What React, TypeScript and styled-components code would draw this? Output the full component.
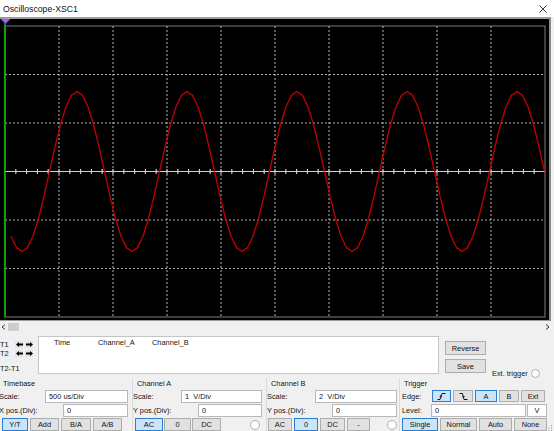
import React, { useMemo } from "react"
import styled, { createGlobalStyle } from "styled-components"

const GlobalStyle = createGlobalStyle`
  html, body {
    margin: 0;
    padding: 0;
    background: #f0f0f0;
  }
  body {
    font-family: "Liberation Sans", Arial, sans-serif;
  }
`

const Window = styled.div`
  position: relative;
  width: 554px;
  height: 431px;
  overflow: hidden;
  background: #f0f0f0;
  display: flex;
  flex-direction: column;
  color: #141414;
  font-size: 7.4px;
`

const TitleBar = styled.div`
  height: 17px;
  flex: none;
  background: #fff;
  display: flex;
  align-items: center;
  justify-content: space-between;
  padding: 0 7px 0 3px;
`

const Title = styled.span`
  font-size: 8.7px;
  color: #111;
`

const Screen = styled.div`
  width: 551px;
  height: 304px;
  flex: none;
  box-sizing: border-box;
  background: #000;
  border-top: 2px solid #9c9c9c;
  border-right: 2px solid #8c8c8c;
  border-bottom: 1px solid #9c9c9c;
  svg {
    display: block;
  }
`

const ScrollRow = styled.div`
  height: 12px;
  flex: none;
  display: flex;
  align-items: center;
  padding: 0 4px 0 1px;
`

const Thumb = styled.div`
  width: 11px;
  height: 8px;
  margin-left: 2px;
  background: #cdcdcd;
`

const CursorPanel = styled.div`
  height: 45px;
  flex: none;
  display: flex;
`

const CursorLabels = styled.div`
  width: 38px;
  flex: none;
  padding-top: 7px;
  box-sizing: border-box;
  display: flex;
  flex-direction: column;
`

const CursorRow = styled.div<{ $mt?: number }>`
  height: 9px;
  display: flex;
  align-items: center;
  margin-top: ${(p) => p.$mt || 0}px;
  white-space: nowrap;
`

const CursorName = styled.span<{ $w?: number }>`
  width: ${(p) => (p.$w ? `${p.$w}px` : "auto")};
  flex: none;
`

const ArrowBtn = styled.div`
  width: 8px;
  height: 7px;
  margin-right: 2px;
  background: #e4e4e4;
  display: flex;
  align-items: center;
  justify-content: center;
`

const Readout = styled.div`
  width: 401px;
  height: 38px;
  margin-top: 3px;
  flex: none;
  box-sizing: border-box;
  background: #fff;
  border: 1px solid #c4c4c4;
  padding: 1px 0 0 15px;
  display: flex;
  line-height: 9px;
`

const ReadCol = styled.span<{ $w?: number }>`
  width: ${(p) => (p.$w ? `${p.$w}px` : "auto")};
  flex: none;
`

const SideButtons = styled.div`
  margin-left: 6px;
  padding-top: 8px;
  display: flex;
  flex-direction: column;
  gap: 4px;
`

const ExtTrigger = styled.div`
  margin-left: 6px;
  align-self: flex-end;
  height: 10px;
  display: flex;
  align-items: center;
`

const Controls = styled.div`
  flex: 1;
  display: flex;
`

const Group = styled.div<{ $w: number; $pl: number; $pr: number; $line?: boolean }>`
  width: ${(p) => p.$w}px;
  flex: none;
  box-sizing: border-box;
  padding: 0 ${(p) => p.$pr}px 0 ${(p) => p.$pl}px;
  border-left: ${(p) => (p.$line ? "1px solid #dadada" : "none")};
  display: flex;
  flex-direction: column;
`

const GroupTitle = styled.div<{ $ml: number }>`
  height: 11px;
  line-height: 11px;
  margin-left: ${(p) => p.$ml}px;
`

const Row = styled.div`
  height: 14px;
  display: flex;
  align-items: center;
  justify-content: space-between;
`

const Label = styled.span<{ $ml?: number; $w?: number }>`
  margin-left: ${(p) => p.$ml || 0}px;
  width: ${(p) => (p.$w ? `${p.$w}px` : "auto")};
  flex: none;
  white-space: nowrap;
`

const Field = styled.div<{ $w: number; $center?: boolean }>`
  width: ${(p) => p.$w}px;
  height: 13px;
  flex: none;
  box-sizing: border-box;
  background: #fff;
  border: 1px solid #b8b8b8;
  padding-left: ${(p) => (p.$center ? 0 : 3)}px;
  line-height: 11px;
  text-align: ${(p) => (p.$center ? "center" : "left")};
`

const Btn = styled.div<{ $w: number; $on?: boolean; $h?: number }>`
  width: ${(p) => p.$w}px;
  height: ${(p) => p.$h || 13}px;
  flex: none;
  box-sizing: border-box;
  border: 1px solid ${(p) => (p.$on ? "#2a7fd0" : "#adadad")};
  background: ${(p) => (p.$on ? "#cce4f7" : "#e1e1e1")};
  display: flex;
  align-items: center;
  justify-content: center;
  color: #111;
`

const ButtonRow = styled.div<{ $ml: number; $gap: number }>`
  margin-top: 1px;
  height: 13px;
  display: flex;
  align-items: center;
  gap: ${(p) => p.$gap}px;
  padding-left: ${(p) => p.$ml}px;
`

const EdgeRow = styled.div`
  height: 14px;
  display: flex;
  align-items: center;
  gap: 2px;
`

const Radio = styled.div<{ $mr?: number }>`
  width: 10px;
  height: 10px;
  margin-left: auto;
  margin-right: ${(p) => p.$mr || 0}px;
  box-sizing: border-box;
  border-radius: 50%;
  border: 1px solid #b0b0b0;
  background: #fdfdfd;
  flex: none;
`

const ExtRadio = styled(Radio)`
  margin-left: 3px;
  width: 9px;
  height: 9px;
`

const Grip = styled.div`
  position: absolute;
  right: 1px;
  bottom: 1px;
  width: 5px;
  height: 6px;
`

// screen geometry (svg-local pixels)
const W = 549
const H = 301
const GX0 = 5
const GX1 = 545
const GY0 = 7
const GY1 = 298
const DX = 54
const DY = 48.5
const CY = GY0 + DY * 3

const Arrow = ({ dir }: { dir: "l" | "r" }) => (
  <svg width="7" height="5" viewBox="0 0 7 5">
    {dir === "l" ? (
      <path d="M0 2.5 L3 0 V1.6 H7 V3.4 H3 V5 Z" fill="#000" />
    ) : (
      <path d="M7 2.5 L4 0 V1.6 H0 V3.4 H4 V5 Z" fill="#000" />
    )}
  </svg>
)

const Scope = () => {
  const trace = useMemo(() => {
    const pts: string[] = []
    for (let x = 11; x <= GX1; x += 5.5) {
      const y = CY - 80 * Math.cos((2 * Math.PI * (x - 77)) / 110)
      pts.push(`${x.toFixed(1)},${y.toFixed(1)}`)
    }
    return pts.join(" ")
  }, [])

  const verticals = Array.from({ length: 9 }, (_, i) => GX0 + DX * (i + 1))
  const horizontals = [1, 2, 4, 5].map((k) => GY0 + DY * k)
  const ticks = Array.from({ length: 49 }, (_, i) => GX0 + 10.8 * (i + 1))

  return (
    <svg width={W} height={H} viewBox={`0 0 ${W} ${H}`}>
      <rect x={GX0} y={GY0} width={GX1 - GX0} height={GY1 - GY0} fill="none" stroke="#7c7c7c" strokeWidth="1" />
      {verticals.map((x) => (
        <line key={x} x1={x} y1={GY0} x2={x} y2={GY1} stroke="#b4b4b4" strokeWidth="1" strokeDasharray="2 2" />
      ))}
      {horizontals.map((y) => (
        <line key={y} x1={GX0} y1={y} x2={GX1} y2={y} stroke="#b4b4b4" strokeWidth="1" strokeDasharray="2 2" />
      ))}
      <line x1={GX0} y1={CY} x2={GX1} y2={CY} stroke="#d2d2d2" strokeWidth="1" />
      {ticks.map((x) => (
        <line key={x} x1={x} y1={CY - 2.5} x2={x} y2={CY + 2.5} stroke="#cfcfcf" strokeWidth="1.2" />
      ))}
      <polyline points={trace} fill="none" stroke="#c00000" strokeWidth="1.3" strokeLinejoin="round" />
      <line x1={GX0} y1={2} x2={GX0} y2={GY1} stroke="#00c000" strokeWidth="1.5" />
      <polygon points="0.5,0 10.5,0 5.5,5" fill="#4a6cff" />
      <polygon points="2,0 9,0 5.5,3.6" fill="#ff3ce0" />
    </svg>
  )
}

const RisingEdge = () => (
  <svg width="9" height="7" viewBox="0 0 9 7">
    <path d="M0.5 6.5 H3 L5 0.5 H8.5" fill="none" stroke="#000" strokeWidth="0.9" />
    <path d="M2.6 3.8 L4 2.6 L4.4 4.4" fill="none" stroke="#000" strokeWidth="0.8" />
  </svg>
)

const FallingEdge = () => (
  <svg width="9" height="7" viewBox="0 0 9 7">
    <path d="M0.5 0.5 H3.5 L5 6.5 H8.5" fill="none" stroke="#000" strokeWidth="0.9" />
    <path d="M3.2 3.2 L4.4 4.4 L5.6 3.2" fill="none" stroke="#000" strokeWidth="0.8" />
  </svg>
)

export default function App() {
  return (
    <>
      <GlobalStyle />
      <Window>
        <TitleBar>
          <Title>Oscilloscope-XSC1</Title>
          <svg width="8" height="8" viewBox="0 0 8 8">
            <path d="M0.5 0.5 L7.5 7.5 M7.5 0.5 L0.5 7.5" stroke="#222" strokeWidth="0.9" />
          </svg>
        </TitleBar>

        <Screen>
          <Scope />
        </Screen>

        <ScrollRow>
          <svg width="5" height="6" viewBox="0 0 5 6">
            <path d="M4 0.5 L1 3 L4 5.5" fill="none" stroke="#333" strokeWidth="1" />
          </svg>
          <Thumb />
          <svg width="5" height="6" viewBox="0 0 5 6" style={{ marginLeft: "auto" }}>
            <path d="M1 0.5 L4 3 L1 5.5" fill="none" stroke="#333" strokeWidth="1" />
          </svg>
        </ScrollRow>

        <CursorPanel>
          <CursorLabels>
            <CursorRow>
              <CursorName $w={15}>T1</CursorName>
              <ArrowBtn><Arrow dir="l" /></ArrowBtn>
              <ArrowBtn><Arrow dir="r" /></ArrowBtn>
            </CursorRow>
            <CursorRow>
              <CursorName $w={15}>T2</CursorName>
              <ArrowBtn><Arrow dir="l" /></ArrowBtn>
              <ArrowBtn><Arrow dir="r" /></ArrowBtn>
            </CursorRow>
            <CursorRow $mt={6}>
              <CursorName>T2-T1</CursorName>
            </CursorRow>
          </CursorLabels>
          <Readout>
            <ReadCol $w={44}>Time</ReadCol>
            <ReadCol $w={54}>Channel_A</ReadCol>
            <ReadCol>Channel_B</ReadCol>
          </Readout>
          <SideButtons>
            <Btn $w={41} $h={14}>Reverse</Btn>
            <Btn $w={41} $h={14}>Save</Btn>
          </SideButtons>
          <ExtTrigger>
            <span>Ext. trigger</span>
            <ExtRadio />
          </ExtTrigger>
        </CursorPanel>

        <Controls>
          <Group $w={132} $pl={0} $pr={4}>
            <GroupTitle $ml={3}>Timebase</GroupTitle>
            <Row>
              <Label $ml={-1}>Scale:</Label>
              <Field $w={83}>500 us/Div</Field>
            </Row>
            <Row>
              <Label $ml={-1}>X pos.(Div):</Label>
              <Field $w={65}>0</Field>
            </Row>
            <ButtonRow $ml={2} $gap={2}>
              <Btn $w={26} $on>Y/T</Btn>
              <Btn $w={29}>Add</Btn>
              <Btn $w={30}>B/A</Btn>
              <Btn $w={29}>A/B</Btn>
            </ButtonRow>
          </Group>

          <Group $w={134} $pl={0} $pr={4} $line>
            <GroupTitle $ml={4}>Channel A</GroupTitle>
            <Row>
              <Label>Scale:</Label>
              <Field $w={81}>1&nbsp;&nbsp;V/Div</Field>
            </Row>
            <Row>
              <Label>Y pos.(Div):</Label>
              <Field $w={64}>0</Field>
            </Row>
            <ButtonRow $ml={2} $gap={1}>
              <Btn $w={28} $on>AC</Btn>
              <Btn $w={27}>0</Btn>
              <Btn $w={29}>DC</Btn>
              <Radio $mr={2} />
            </ButtonRow>
          </Group>

          <Group $w={133} $pl={0} $pr={2} $line>
            <GroupTitle $ml={4}>Channel B</GroupTitle>
            <Row>
              <Label>Scale:</Label>
              <Field $w={82}>2&nbsp;&nbsp;V/Div</Field>
            </Row>
            <Row>
              <Label>Y pos.(Div):</Label>
              <Field $w={65}>0</Field>
            </Row>
            <ButtonRow $ml={1} $gap={2}>
              <Btn $w={24}>AC</Btn>
              <Btn $w={24} $on>0</Btn>
              <Btn $w={25}>DC</Btn>
              <Btn $w={23}>-</Btn>
              <Radio />
            </ButtonRow>
          </Group>

          <Group $w={155} $pl={2} $pr={7} $line>
            <GroupTitle $ml={2}>Trigger</GroupTitle>
            <EdgeRow>
              <Label $w={28}>Edge:</Label>
              <Btn $w={19} $h={12} $on><RisingEdge /></Btn>
              <Btn $w={20} $h={12}><FallingEdge /></Btn>
              <Btn $w={22} $h={12} $on>A</Btn>
              <Btn $w={20} $h={12}>B</Btn>
              <Btn $w={24} $h={12}>Ext</Btn>
            </EdgeRow>
            <EdgeRow>
              <Label $w={27}>Level:</Label>
              <Field $w={95}>0</Field>
              <Field $w={20} $center style={{ marginLeft: -1 }}>V</Field>
            </EdgeRow>
            <ButtonRow $ml={0} $gap={2}>
              <Btn $w={36} $on>Single</Btn>
              <Btn $w={37}>Normal</Btn>
              <Btn $w={33}>Auto</Btn>
              <Btn $w={33}>None</Btn>
            </ButtonRow>
          </Group>
        </Controls>

        <Grip>
          <svg width="5" height="6" viewBox="0 0 5 6">
            <rect x="3" y="0" width="1" height="1" fill="#999" />
            <rect x="3" y="2.5" width="1" height="1" fill="#999" />
            <rect x="0.5" y="2.5" width="1" height="1" fill="#999" />
            <rect x="3" y="5" width="1" height="1" fill="#999" />
            <rect x="0.5" y="5" width="1" height="1" fill="#999" />
          </svg>
        </Grip>
      </Window>
    </>
  )
}
